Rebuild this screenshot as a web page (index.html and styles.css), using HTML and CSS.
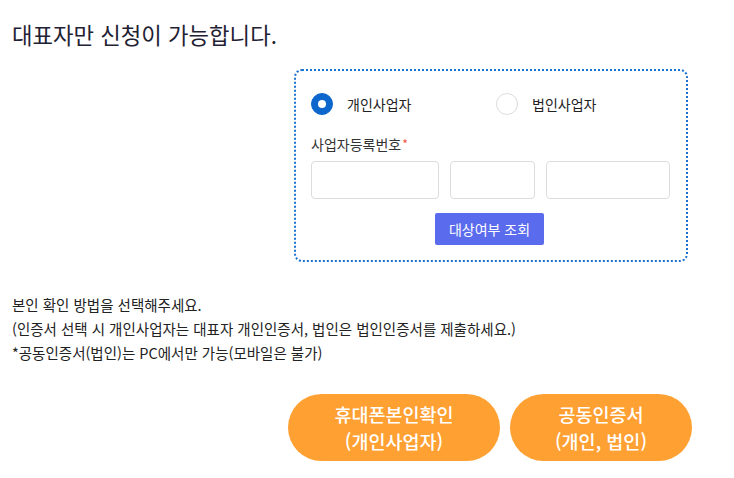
FILE: index.html
```html
<!DOCTYPE html>
<html lang="ko">
<head>
<meta charset="utf-8">
<link rel="stylesheet" href="styles.css">
</head>
<body>
<h1 class="title">대표자만 신청이 가능합니다.</h1>
<div class="form-box">
  <div class="radio-row">
    <label class="option option-first"><span class="radio radio-on"></span><span class="opt-text">개인사업자</span></label>
    <label class="option"><span class="radio"></span><span class="opt-text">법인사업자</span></label>
  </div>
  <div class="field-label">사업자등록번호<span class="req">*</span></div>
  <div class="inputs">
    <span class="input"></span>
    <span class="input"></span>
    <span class="input"></span>
  </div>
  <div class="btn-wrap"><button class="check-btn">대상여부 조회</button></div>
</div>
<div class="notice">
  <p>본인 확인 방법을 선택해주세요.</p>
  <p>(인증서 선택 시 개인사업자는 대표자 개인인증서, 법인은 법인인증서를 제출하세요.)</p>
  <p>*공동인증서(법인)는 PC에서만 가능(모바일은 불가)</p>
</div>
<div class="actions">
  <button class="pill pill-phone">휴대폰본인확인<br>(개인사업자)</button>
  <button class="pill pill-cert">공동인증서<br>(개인, 법인)</button>
</div>
</body>
</html>
```
FILE: styles.css
```css
* { box-sizing: border-box; }
html, body { margin: 0; padding: 0; background: #fff; }
body {
  padding: 0 12px;
  font-family: "Noto Sans CJK KR", "Noto Sans", sans-serif;
  color: #222;
}
.title {
  margin: 18px 0 0;
  font-size: 22.3px;
  line-height: 32px;
  font-weight: 400;
  color: #1f2233;
}
.form-box {
  margin: 19px 0 0 282px;
  width: 394px;
  border: 2px dotted #1a73d0;
  border-radius: 8px;
  padding: 22px 18px 15px 15px;
}
.radio-row { display: flex; align-items: center; height: 22px; }
.option { display: flex; align-items: center; gap: 14px; font-size: 14px; color: #222; }
.option-first { width: 185px; }
.radio {
  width: 22px; height: 22px; border-radius: 50%;
  border: 1px solid #ddd; background: #fff; position: relative;
}
.radio-on { background: #0c66cc; border-color: #0c66cc; }
.radio-on::after {
  content: ""; position: absolute; left: 6px; top: 6px;
  width: 8px; height: 8px; border-radius: 50%; background: #fff;
}
.field-label {
  margin-top: 19px;
  font-size: 14px; line-height: 20px; color: #333;
}
.req { color: #f0533e; font-size: 12px; vertical-align: top; margin-left: 1px; }
.inputs {
  margin-top: 7px;
  display: grid;
  grid-template-columns: 128px 85px 124px;
  gap: 11px;
}
.input {
  height: 38px; border: 1px solid #dcdcdc; border-radius: 4px; background: #fff;
}
.btn-wrap { display: flex; justify-content: center; margin-top: 14px; }
.check-btn {
  width: 109px; height: 32px; border: 0; border-radius: 2px;
  background: #5a6ced; color: #fff;
  font-family: inherit; font-size: 14px; padding: 0;
}
.notice { margin-top: 31px; font-size: 14.5px; line-height: 24px; color: #222; }
.notice p { margin: 0; }
.actions { display: flex; gap: 10px; margin: 29px 0 0 276px; }
.pill {
  height: 67px; border: 0; border-radius: 34px;
  background: #ffa033; color: #fff;
  font-family: inherit; font-size: 18.5px; font-weight: 500; line-height: 27px;
  padding: 0;
}
.pill-phone { width: 212px; }
.pill-cert { width: 182px; }
```
